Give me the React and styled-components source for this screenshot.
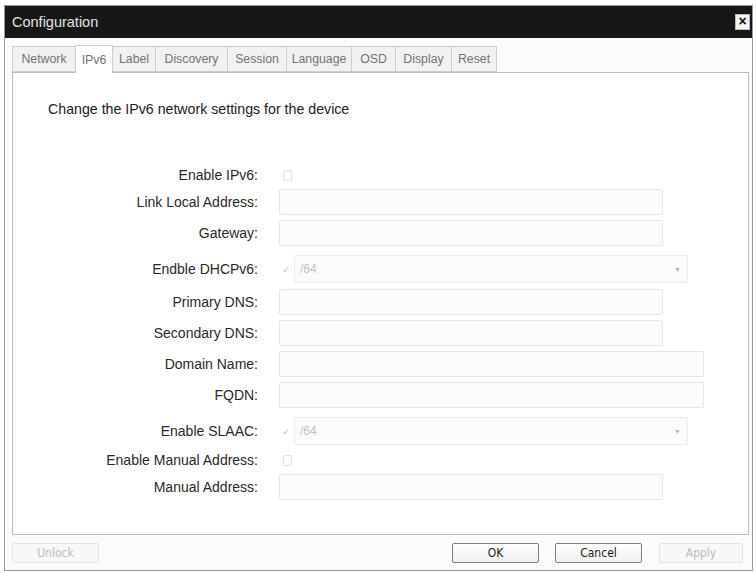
import React from "react";
import styled, { createGlobalStyle } from "styled-components";

const GlobalStyle = createGlobalStyle`
  html, body {
    margin: 0;
    padding: 0;
    background: #ffffff;
  }
  body {
    font-family: "Liberation Sans", Arial, sans-serif;
  }
`;

const Window = styled.div`
  width: 749px;
  height: 566px;
  margin: 5px 0 0 4px;
  box-sizing: border-box;
  border: 1px solid #9a9a9a;
  background: #fbfbfb;
  display: flex;
  flex-direction: column;
`;

const TitleBar = styled.div`
  height: 32px;
  flex-shrink: 0;
  background: #171717;
  display: flex;
  align-items: center;
  justify-content: space-between;
  padding: 0 2px 0 7px;
  color: #e2e2e2;
  font-size: 14.5px;
`;

const CloseButton = styled.div`
  width: 15px;
  height: 16px;
  background: #f4f4f4;
  border: 1px solid #bbb;
  box-sizing: border-box;
  color: #111;
  font-size: 14px;
  line-height: 13px;
  text-align: center;
  font-weight: bold;
`;

const Body = styled.div`
  flex: 1;
  display: flex;
  flex-direction: column;
  padding: 8px 3px 0 7px;
  min-height: 0;
`;

const TabStrip = styled.div`
  display: flex;
  align-items: flex-end;
  height: 26px;
  position: relative;
  z-index: 1;
`;

const Tab = styled.div`
  width: ${(p) => p.$w}px;
  height: ${(p) => (p.$active ? "28px" : "26px")};
  margin-bottom: ${(p) => (p.$active ? "-1px" : "0")};
  box-sizing: border-box;
  display: flex;
  align-items: center;
  justify-content: center;
  font-size: 12.3px;
  color: #747474;
  background: ${(p) => (p.$active ? "#ffffff" : "#f1f1f1")};
  border: 1px solid #cdcdcd;
  border-bottom: ${(p) => (p.$active ? "none" : "1px solid #cdcdcd")};
  margin-left: -1px;
  &:first-child {
    margin-left: 0;
  }
`;

const Panel = styled.div`
  height: 463px;
  box-sizing: border-box;
  background: #ffffff;
  border: 1px solid #bdbdbd;
  padding: 28px 0 0 35px;
`;

const Intro = styled.div`
  font-size: 14.2px;
  color: #222;
  height: 16px;
  line-height: 16px;
`;

const Form = styled.div`
  margin-top: 49px;
  display: grid;
  grid-template-columns: 210px 1fr;
  column-gap: 21px;
  row-gap: 5px;
  align-items: center;
`;

const Label = styled.div`
  text-align: right;
  font-size: 14px;
  color: #2a2a2a;
  white-space: nowrap;
  margin: ${(p) => p.$margin || "0"};
`;

const Control = styled.div`
  display: flex;
  align-items: center;
  min-height: ${(p) => p.$h || 26}px;
  margin: ${(p) => p.$margin || "0"};
`;

const TextBox = styled.div`
  width: ${(p) => p.$w}px;
  height: 26px;
  box-sizing: border-box;
  border: 1px solid #e6e6e6;
  border-radius: 2px;
  background: #fcfcfc;
`;

const CheckBox = styled.div`
  width: 7px;
  height: 9px;
  margin-left: 4px;
  border: 1px solid #e2e2e2;
  border-radius: 2px;
  background: #fdfdfd;
`;

const CheckMark = styled.span`
  width: 15px;
  font-size: 10px;
  color: #c4c4c4;
  padding-left: 3px;
  box-sizing: border-box;
`;

const Select = styled.div`
  width: 394px;
  height: 28px;
  box-sizing: border-box;
  border: 1px solid #ececec;
  border-radius: 2px;
  background: #fbfbfb;
  display: flex;
  align-items: center;
  justify-content: space-between;
  padding: 0 6px 0 5px;
  font-size: 12px;
  color: #c2c2c2;
`;

const Arrow = styled.span`
  font-size: 7px;
  color: #b8b8b8;
`;

const Footer = styled.div`
  flex: 1;
  display: flex;
  align-items: flex-start;
  padding: 8px 0 0;
`;

const Button = styled.div`
  width: ${(p) => p.$w || 87}px;
  height: 20px;
  box-sizing: border-box;
  margin-left: ${(p) => p.$ml || 0}px;
  border: 1px solid ${(p) => (p.$disabled ? "#e4e4e4" : "#7d7d7d")};
  border-radius: 2px;
  background: ${(p) =>
    p.$disabled ? "#f8f8f8" : "linear-gradient(#ffffff, #f0f0f0)"};
  color: ${(p) => (p.$disabled ? "#bcbcbc" : "#1a1a1a")};
  font-family: "DejaVu Sans Condensed", "Liberation Sans", sans-serif;
  font-size: 12px;
  display: flex;
  align-items: center;
  justify-content: center;
`;

const tabs = [
  ["Network", 64],
  ["IPv6", 38],
  ["Label", 44],
  ["Discovery", 73],
  ["Session", 60],
  ["Language", 66],
  ["OSD", 45],
  ["Display", 57],
  ["Reset", 46],
];

function Check({ checked }) {
  return checked ? <CheckMark>✓</CheckMark> : <CheckBox />;
}

export default function App() {
  return (
    <>
      <GlobalStyle />
      <Window>
        <TitleBar>
          <span>Configuration</span>
          <CloseButton>×</CloseButton>
        </TitleBar>
        <Body>
          <TabStrip>
            {tabs.map(([name, w]) => (
              <Tab key={name} $w={w} $active={name === "IPv6"}>
                {name}
              </Tab>
            ))}
          </TabStrip>
          <Panel>
            <Intro>Change the IPv6 network settings for the device</Intro>
            <Form>
              <Label>Enable IPv6:</Label>
              <Control $h={18}>
                <Check />
              </Control>

              <Label>Link Local Address:</Label>
              <Control>
                <TextBox $w={384} />
              </Control>

              <Label>Gateway:</Label>
              <Control>
                <TextBox $w={384} />
              </Control>

              <Label $margin="4px 0 1px">Endble DHCPv6:</Label>
              <Control $h={28} $margin="4px 0 1px">
                <Check checked />
                <Select>
                  <span>/64</span>
                  <Arrow>▼</Arrow>
                </Select>
              </Control>

              <Label>Primary DNS:</Label>
              <Control>
                <TextBox $w={384} />
              </Control>

              <Label>Secondary DNS:</Label>
              <Control>
                <TextBox $w={384} />
              </Control>

              <Label>Domain Name:</Label>
              <Control>
                <TextBox $w={425} />
              </Control>

              <Label>FQDN:</Label>
              <Control>
                <TextBox $w={425} />
              </Control>

              <Label $margin="4px 0 1px">Enable SLAAC:</Label>
              <Control $h={28} $margin="4px 0 1px">
                <Check checked />
                <Select>
                  <span>/64</span>
                  <Arrow>▼</Arrow>
                </Select>
              </Control>

              <Label>Enable Manual Address:</Label>
              <Control $h={18}>
                <Check />
              </Control>

              <Label>Manual Address:</Label>
              <Control>
                <TextBox $w={384} />
              </Control>
            </Form>
          </Panel>
          <Footer>
            <Button $disabled $ml={0}>
              Unlock
            </Button>
            <Button $ml={353}>OK</Button>
            <Button $ml={16}>Cancel</Button>
            <Button $disabled $ml={17} $w={84}>
              Apply
            </Button>
          </Footer>
        </Body>
      </Window>
    </>
  );
}
